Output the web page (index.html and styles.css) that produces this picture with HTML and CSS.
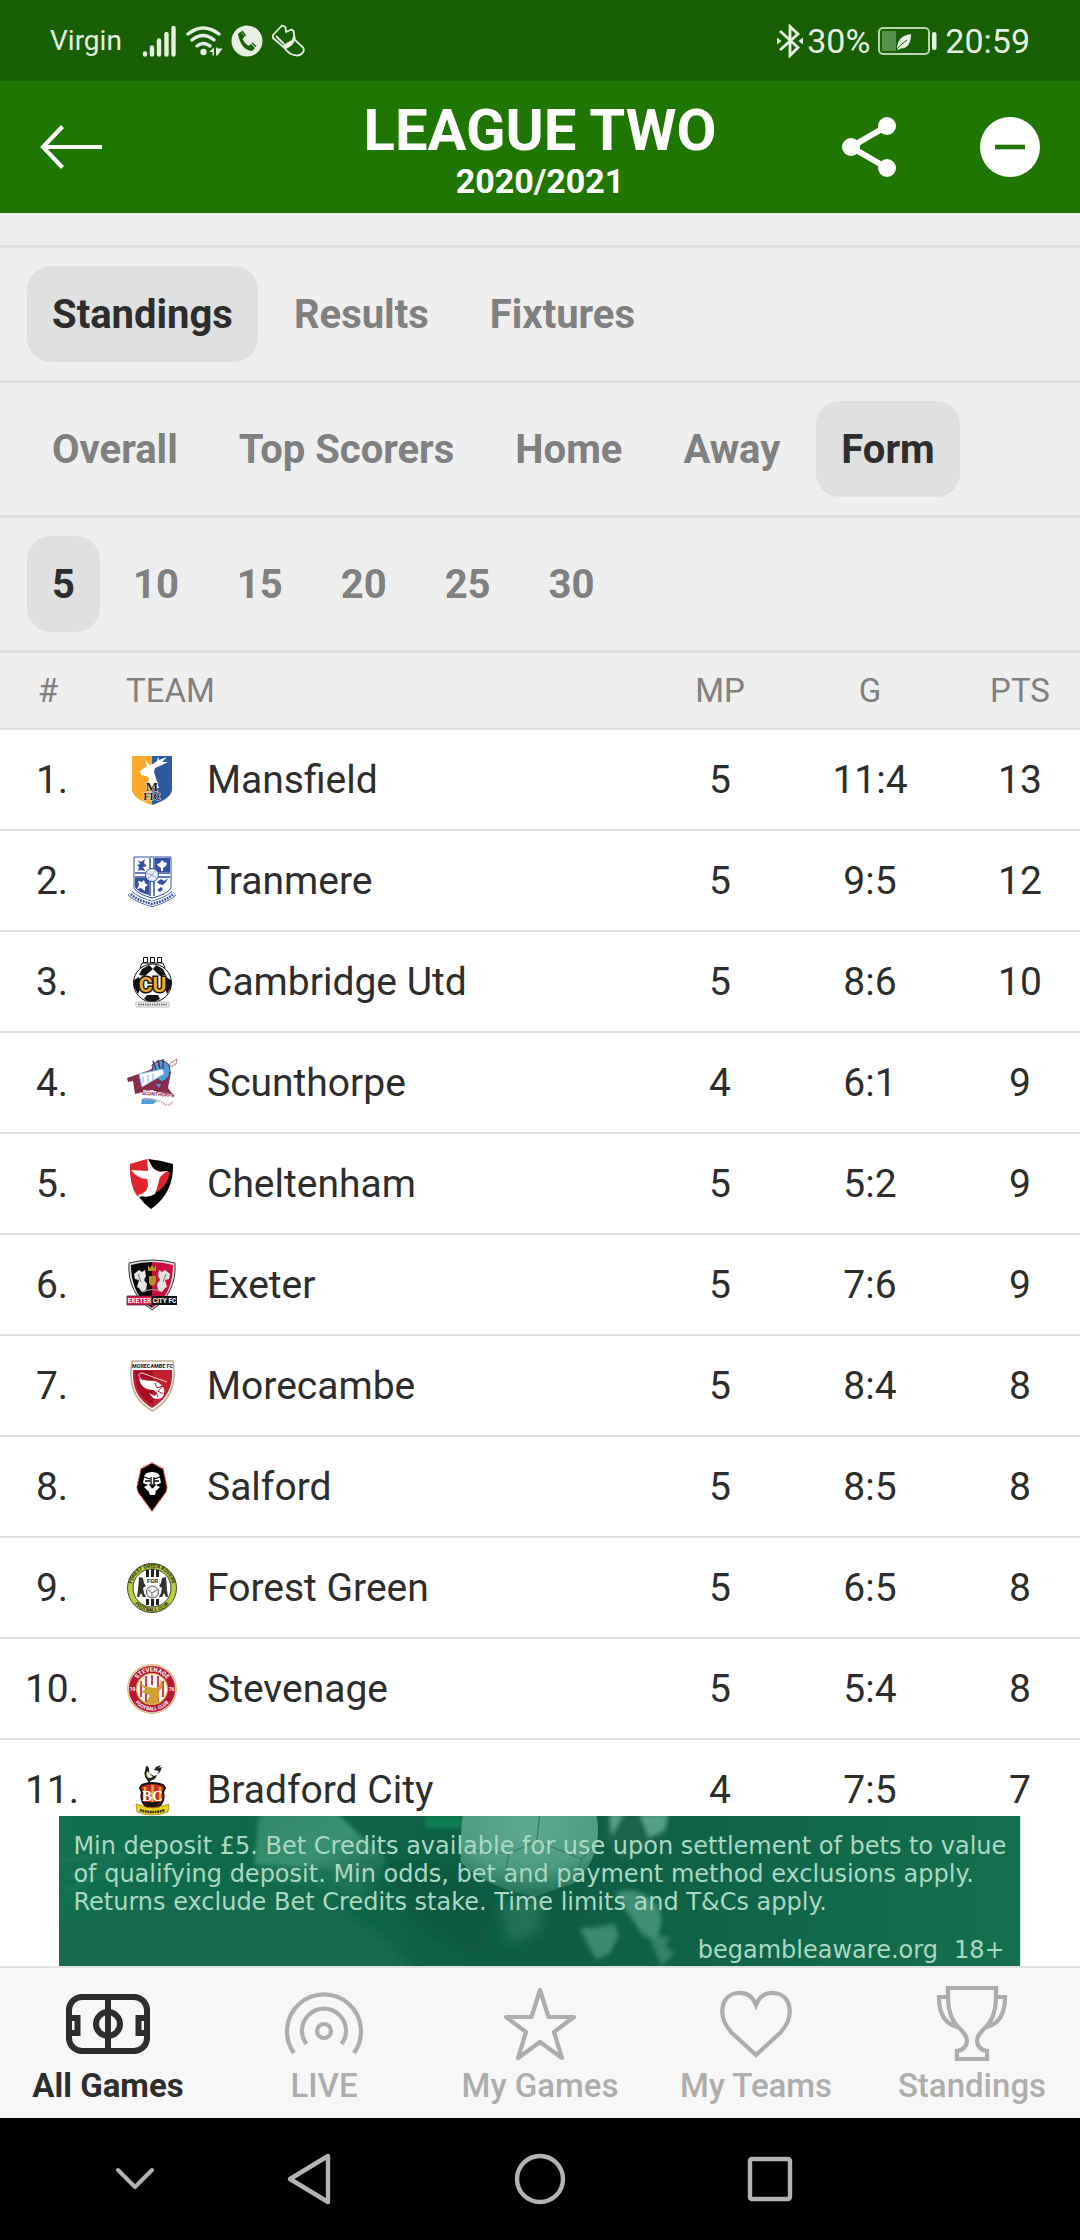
FILE: index.html
```html
<!DOCTYPE html>
<html lang="en">
<head>
  <meta charset="UTF-8">
  <meta name="viewport" content="width=device-width, initial-scale=1">
  <title>League Two 2020/2021</title>
  <link rel="stylesheet" href="styles.css">
</head>
<body>

  <div class="status-bar">
    <div class="status-left">
      <span class="carrier">Virgin</span>
      <svg width="35" height="32" viewBox="0 0 35 32" stroke="#e6efe2" stroke-width="4.4" stroke-linecap="round">
        <path d="M3 28.5v1M10 22.500v7M17 15.500v14M24.500 9v20.500M31.500 3v26.500"/>
      </svg>
      <svg width="38" height="32" viewBox="0 0 38 32" fill="none" stroke="#e6efe2" stroke-width="3.400" stroke-linecap="round">
        <path d="M3 9Q18 -3 34 9M7 15Q18 6 29 15M12 21Q18 16 25 21"/>
        <circle cx="18.500" cy="27" r="3.200" fill="#e6efe2" stroke="none"/>
        <path d="M24 27l5-4.500v8h-1.500v-3.500zM31 22.500h1.500v1h5l-5 7h-1.500z" fill="#e6efe2" stroke="none"/>
      </svg>
      <svg width="32" height="32" viewBox="0 0 32 32">
        <circle cx="16" cy="16" r="15.500" fill="#e6efe2"/>
        <path d="M7 9l3-2.500 3.500 5-2 2.500q2 4.500 6 7l2.500-2 4 4-3 3Q10 25 7 9z" fill="#175f00"/>
        <path d="M11 6l3.500 5M21 18l4 3.500" stroke="#175f00" stroke-width="1.500"/>
      </svg>
      <svg width="34" height="34" viewBox="0 0 34 34" fill="none" stroke="#e6efe2" stroke-width="1.800" stroke-linejoin="round">
        <path d="M2 11L11 1.500l3.500 1.500.5 5 5.500-2.500 2 1.500 1.500 9 8 7.500q2 3-1 6-4 4-12 0-4-3-6-6L2 14z"/>
        <path d="M24 16q-1 5-9 9l-3-4 9-5 1.500-6z" fill="#e6efe2" stroke="none"/>
        <path d="M5 12l8 8"/>
      </svg>
    </div>
    <div class="status-right">
      <svg width="26" height="34" viewBox="0 0 26 34" fill="none" stroke="#e6efe2" stroke-width="2.800">
        <path d="M3 7l18 16.500-8 8V2.500l8 7.500L3 26"/>
        <path d="M0 13.500l4.500 3.500L0 20.500zM26 13.500L21.500 17l4.500 3.500z" fill="#e6efe2" stroke="none"/>
      </svg>
      <span>30%</span>
      <svg class="battery" width="59" height="28" viewBox="0 0 59 28">
        <rect x="1" y="1" width="50" height="26" rx="4" fill="none" stroke="#b9d2b0" stroke-width="2"/>
        <rect x="4" y="4" width="14" height="20" rx="1" fill="#58904b"/>
        <path d="M19 22q0-13 14-15 0 14-10 14.500L20 23z" fill="#e6efe2"/>
        <path d="M19 22q5-6 10-9" fill="none" stroke="#175f00"/>
        <rect x="54" y="5" width="4.500" height="18" rx="2" fill="#e6efe2"/>
      </svg>
      <span>20:59</span>
    </div>
  </div>

  <header class="app-header">
    <button class="icon-button" type="button" aria-label="Back">
      <svg width="62" height="44" viewBox="0 0 62 44" fill="none" stroke="#fff" stroke-width="4.200">
        <path d="M62 22H4M22.500 1.500L3 22l19.500 20.500"/>
      </svg>
    </button>
    <div class="title">
      <h1>LEAGUE TWO</h1>
      <p>2020/2021</p>
    </div>
    <div class="header-actions">
      <button class="icon-button" type="button" aria-label="Share">
        <svg width="54" height="60" viewBox="0 0 54 60" fill="#fff">
          <path d="M45 9L9 30l36 21" fill="none" stroke="#fff" stroke-width="6"/>
          <circle cx="9" cy="30" r="9"/>
          <circle cx="45" cy="9" r="9"/>
          <circle cx="45" cy="51" r="9"/>
        </svg>
      </button>
      <button class="icon-button" type="button" aria-label="Remove league">
        <svg width="60" height="60" viewBox="0 0 60 60">
          <circle cx="30" cy="30" r="30" fill="#fff"/>
          <path d="M15 30h30" stroke="#1f7600" stroke-width="4.600"/>
        </svg>
      </button>
    </div>
  </header>

  <main class="content">
    <nav class="tabs" aria-label="Sections">
      <button class="tab active" type="button">Standings</button>
      <button class="tab" type="button">Results</button>
      <button class="tab" type="button">Fixtures</button>
    </nav>
    <nav class="tabs" aria-label="Tables">
      <button class="tab" type="button">Overall</button>
      <button class="tab" type="button">Top Scorers</button>
      <button class="tab" type="button">Home</button>
      <button class="tab" type="button">Away</button>
      <button class="tab active" type="button">Form</button>
    </nav>
    <nav class="tabs matches" aria-label="Number of matches">
      <button class="tab active" type="button">5</button>
      <button class="tab" type="button">10</button>
      <button class="tab" type="button">15</button>
      <button class="tab" type="button">20</button>
      <button class="tab" type="button">25</button>
      <button class="tab" type="button">30</button>
    </nav>

    <table class="standings">
      <colgroup>
        <col class="col-rank">
        <col class="col-logo">
        <col>
        <col class="col-mp">
        <col class="col-goals">
        <col class="col-pts">
      </colgroup>
      <thead>
        <tr>
          <th class="rank">#</th>
          <th class="team" colspan="2">TEAM</th>
          <th>MP</th>
          <th>G</th>
          <th>PTS</th>
        </tr>
      </thead>
      <tbody>
        <tr>
          <td>1.</td>
          <td class="logo">
            <svg viewBox="0 0 52 52">
              <path d="M6 2h20v49Q7 45 6 36z" fill="#faa928"/>
              <path d="M26 2h20v34q-1 9-20 15z" fill="#2c5a9e"/>
              <path d="M14 17l7-5-2-6 5 5 3-1 4-3 1-4 1 3 8-3-5 5h6l-8 4-5 2-1 4 5 16H22l1-10-3-2-5-1z" fill="#fff"/>
              <text x="26" y="37" font-size="13" class="crest-serif crest-outline" fill="#222">M</text>
              <text x="26" y="46" font-size="10" class="crest-serif crest-outline" fill="#222">FIC</text>
            </svg>
          </td>
          <td class="team">Mansfield</td>
          <td>5</td><td>11:4</td><td>13</td>
        </tr>
        <tr>
          <td>2.</td>
          <td class="logo">
            <svg viewBox="0 0 52 52">
              <path d="M8 2h37v31q-3 6-19 10Q11 39 8 33z" fill="#fff" stroke="#3350a4"/>
              <path d="M29 3h15v14H29zM9 23h14v17q-12-3-14-8z" fill="#3350a4"/>
              <path d="M24 3v38M28 3v38M9 18h35M9 22h35" stroke="#3350a4" stroke-width="1.500"/>
              <path d="M12 5l3 2 4-3-1 4 3 3-4 1 2 4-5-1-2 1 1-4-2-2 3-1zM31 27l4-3 3 2 4-3-2 4-3 3-4-1zM31 35l4-3 2 2-3 3z" fill="#3350a4"/>
              <path d="M36 5l2 2 3 1-1 3-3 2v3h-2v-3l-3-2-1-2 3-1zM12 26l4 1 2-2 1 3 3 2-3 2v4l-4-3-4 1 2-4z" fill="#fff"/>
              <circle cx="26" cy="20" r="6.500" fill="#edf1fa" stroke="#3350a4"/>
              <path d="M21 18l10 5M22 24l7-8" stroke="#8fa0d2"/>
              <path d="M4 38q5 6 22 11 17-5 22-11" fill="none" stroke="#3350a4" stroke-width="6"/>
              <path d="M4 38q5 6 22 11 17-5 22-11" fill="none" stroke="#fff" stroke-width="4.500"/>
              <path d="M5 39q5 6 21 10 16-4 21-10" fill="none" stroke="#3350a4" stroke-width="2.500" stroke-dasharray="1.800 1"/>
            </svg>
          </td>
          <td class="team">Tranmere</td>
          <td>5</td><td>9:5</td><td>12</td>
        </tr>
        <tr>
          <td>3.</td>
          <td class="logo">
            <svg viewBox="0 0 52 52">
              <path d="M17.500 1.500h4v5h-4zM24.500 1.500h4v5h-4zM31.500 1.500h4v5h-4zM16 7h21l2 5H14z" fill="#fff" stroke="#111"/>
              <circle cx="26.500" cy="27" r="19" fill="#fff" stroke="#111"/>
              <path d="M16 13l7-4 4 4-8 7-6-1zM37 13l-7-4-3 4 7 7 6-1zM8 24l5-3 3 8-4 9-4-7zM45 24l-5-3-2 8 3 9 4-7zM21 39h11l2 4-8 4-8-4z" fill="#111"/>
              <text x="26.500" y="36" font-size="21" class="crest-text crest-cu" fill="#f0a72f">CU</text>
              <rect x="10" y="46" width="33" height="5" rx="1" fill="#fff" stroke="#999" stroke-width=".7"/>
              <path d="M12 48.500h29" stroke="#666" stroke-width="1.800" stroke-dasharray="1.500 .8"/>
            </svg>
          </td>
          <td class="team">Cambridge Utd</td>
          <td>5</td><td>8:6</td><td>10</td>
        </tr>
        <tr>
          <td>4.</td>
          <td class="logo">
            <svg viewBox="0 0 52 52">
              <path d="M1 21l23-8 7-6 14 8-3 16 6 8-2 1-20-7-17 4-2-13-5 1z" fill="#8a2c4c"/>
              <path d="M26 8q10-9 17 0 4 12-7 17l-8-6z" fill="#4d9fd6" stroke="#533053"/>
              <path d="M27 4l3 9M32 3l2 9M37 2v11" stroke="#533053" stroke-width="1.500"/>
              <path d="M13 17l24-5 1 5-22 13z" fill="#fff" stroke="#7ec0e6"/>
              <path d="M17 20v6M22 18v7M27 17v6" stroke="#9dccec" stroke-width="1.500"/>
              <path d="M43 7l8-5-1 5-5 3z" fill="#fff" stroke="#b9798d"/>
              <path d="M30 27h5l-2 4zM16 42q9-2 15 2l-4 3H15z" fill="#4d9fd6"/>
              <path d="M17 33l30 4v8l-30-5z" fill="#fff"/>
              <text x="32" y="39" font-size="5" class="crest-text" fill="#8a2c4c" transform="rotate(4 32 38)">SCUNTHORPE</text>
              <path d="M18 42q14 0 19 4t10-1" fill="none" stroke="#c79aa9" stroke-width="2" stroke-dasharray="1.500 1"/>
            </svg>
          </td>
          <td class="team">Scunthorpe</td>
          <td>4</td><td>6:1</td><td>9</td>
        </tr>
        <tr>
          <td>5.</td>
          <td class="logo">
            <svg viewBox="0 0 52 52">
              <path d="M22 1q12 1 25 5 1 29-22 45-7-5-12-12 15-3 24-18l5-8-12 3z" fill="#050505"/>
              <path d="M4 6l17-5 5 11 18 2q-3 16-16 21l-17 3Q3 26 4 6z" fill="#e0242d"/>
              <path d="M5 12l17 1-1-12q5 11 13 13l7-1-7 6q-4 15-5 17-8 5-17 1 13-3 9-16Q12 21 5 12z" fill="#fff"/>
            </svg>
          </td>
          <td class="team">Cheltenham</td>
          <td>5</td><td>5:2</td><td>9</td>
        </tr>
        <tr>
          <td>6.</td>
          <td class="logo">
            <svg viewBox="0 0 52 52">
              <path d="M3 4q23-6 46 0 2 30-23 47Q1 34 3 4z" fill="#ddd" stroke="#333"/>
              <path d="M5 6q10-3 21-3v46Q5 36 5 6z" fill="#080808"/>
              <path d="M47 6q-10-3-21-3v46Q47 36 47 6z" fill="#c90f3e"/>
              <path d="M8 15l5-4 3 2 3-2 1 6-2 4 3 4-1 6-4 2-3-4-2-1 2-7-4-1zM44 15l-5-4-3 2-3-2-1 6 2 4-3 4 1 6 4 2 3-4 2-1-2-7 4-1z" fill="#e5e5e5"/>
              <path d="M12 15l3 8M40 15l-3 8" stroke="#777"/>
              <path d="M22 6l2 3 2-3 2 3 2-3v6h-8zM23 17h7v6q-1 3-3.500 4Q23 26 23 23z" fill="#b48f22"/>
              <path d="M17 33q9-5 19 0" stroke="#aaa" fill="none"/>
              <path d="M1 37h25v9H1z" fill="#e3174a" stroke="#333" stroke-width=".8"/>
              <path d="M26 37h25v9H26z" fill="#111"/>
              <text x="26" y="44" font-size="6.500" class="crest-text" fill="#fff">EXETER CITY FC</text>
            </svg>
          </td>
          <td class="team">Exeter</td>
          <td>5</td><td>7:6</td><td>9</td>
        </tr>
        <tr>
          <td>7.</td>
          <td class="logo">
            <svg viewBox="0 0 52 52">
              <path d="M6 1h41q0 5 1 7 2 29-21.500 43Q3 38 5 9q1-3 1-8z" fill="#fff" stroke="#bfae92" stroke-width="1.500"/>
              <path d="M7 10h39q2 25-20 38Q5 36 7 10z" fill="#c41f31"/>
              <path d="M9 11h18v34Q8 35 9 11z" fill="#a60d22"/>
              <path d="M13 19q7 2 16 2 11 4 9 13-2 7-11 4l-4-5 6 3q3-3-1-6-12 1-15-11z" fill="#fff"/>
              <path d="M15 19q-5-6 1-6l25 9" fill="none" stroke="#f5d7da"/>
              <path d="M29 23l2 5 6-2-5 5 5 3M32 37l-2-5" stroke="#c41f31" fill="none"/>
              <text x="26.500" y="8" font-size="5.400" class="crest-text" fill="#111">MORECAMBE FC</text>
            </svg>
          </td>
          <td class="team">Morecambe</td>
          <td>5</td><td>8:4</td><td>8</td>
        </tr>
        <tr>
          <td>8.</td>
          <td class="logo">
            <svg viewBox="0 0 52 52">
              <path d="M26 2l11 6 4 18-1 5-14 19-14-19-1-5 4-18z" fill="#000" stroke="#d83a32" stroke-width="1.200" stroke-dasharray="2 .8"/>
              <path d="M18 17q0-6 8-6t8 6l1 5-5 2 4 2-4 4-4-3-4 3-4-4 4-2-5-2z" fill="#fff"/>
              <path d="M18 16l6 2M34 16l-6 2M19 20h5M28 20h5M24 24h5l-2.500 3zM25 16v7M28 16v7" stroke="#000" stroke-width="1.300"/>
              <path d="M22 29l4-2 4 2-1 5h-5z" fill="#fff"/>
            </svg>
          </td>
          <td class="team">Salford</td>
          <td>5</td><td>8:5</td><td>8</td>
        </tr>
        <tr>
          <td>9.</td>
          <td class="logo">
            <svg viewBox="0 0 52 52">
              <circle cx="26" cy="26" r="24.500" fill="#b5cf35" stroke="#444"/>
              <circle cx="26" cy="26" r="19" fill="#fff" stroke="#444"/>
              <path d="M21.500 8v7M26.500 7v8M31.500 8v7M21.500 37v6M26.500 37v7M31.500 37v6" stroke="#222" stroke-width="3"/>
              <path d="M13 15l4 1 1 5 2 3-3 2 1 5 2 4h-3l-2-4-2 4h-2l1-7zM40 15l-4 1-1 5-2 3 3 2-1 5-2 4h3l2-4 2 4h2l-1-7z" fill="#333"/>
              <text x="26.500" y="21" font-size="6" class="crest-text" fill="#222">FGR</text>
              <circle cx="26.500" cy="30" r="6" fill="#eee" stroke="#555"/>
              <path d="M22 28l4 3 5-3M26 31v5" stroke="#777" fill="none"/>
              <path id="green-top" d="M5.500 26a20.500 20.500 0 0 1 41 0" fill="none"/>
              <path id="green-bottom" d="M2.500 26a23.500 23.500 0 0 0 47 0" fill="none"/>
              <text font-size="5" class="crest-text" fill="#222"><textPath href="#green-top" startOffset="50%">FOREST GREEN ROVERS</textPath></text>
              <text font-size="5" class="crest-text" fill="#222"><textPath href="#green-bottom" startOffset="50%">FOOTBALL CLUB</textPath></text>
            </svg>
          </td>
          <td class="team">Forest Green</td>
          <td>5</td><td>6:5</td><td>8</td>
        </tr>
        <tr>
          <td>10.</td>
          <td class="logo">
            <svg viewBox="0 0 52 52">
              <circle cx="26" cy="26" r="25" fill="#d9bd7c"/>
              <circle cx="26" cy="26" r="23.500" fill="#b81632" stroke="#fff" stroke-width=".6"/>
              <circle cx="26" cy="26" r="15.500" fill="#fff" stroke="#d9a93c" stroke-width="1.200"/>
              <path d="M15 18v16M20 13v26M32 13v26M37 18v16M26 12v10" stroke="#c74458" stroke-width="2.200"/>
              <path d="M14 17q2 7 9 7l6 1q7-1 5-9 6 7-1 12v5l-1 7q-6 2-12 0l4-8-9-3 5-3q-7-3-6-9z" fill="#cfa032"/>
              <text x="6.500" y="28" font-size="5" class="crest-text" fill="#fff">19</text>
              <text x="45.500" y="28" font-size="5" class="crest-text" fill="#fff">76</text>
              <path id="stevenage-top" d="M8.500 26a17.500 17.500 0 0 1 35 0" fill="none"/>
              <path id="stevenage-bottom" d="M4.500 26a21.500 21.500 0 0 0 43 0" fill="none"/>
              <text font-size="6" class="crest-text" fill="#fff"><textPath href="#stevenage-top" startOffset="50%">STEVENAGE</textPath></text>
              <text font-size="5" class="crest-text" fill="#fff"><textPath href="#stevenage-bottom" startOffset="50%">FOOTBALL CLUB</textPath></text>
            </svg>
          </td>
          <td class="team">Stevenage</td>
          <td>5</td><td>5:4</td><td>8</td>
        </tr>
        <tr>
          <td>11.</td>
          <td class="logo">
            <svg viewBox="0 0 52 52">
              <path d="M20 2q4 0 3 7l5 3q6-1 8-9l-3 1 2-3-5 2-2 3 5 1-4 8-5 2v3h-2v-3q-5-5-3-10z" fill="#222"/>
              <path d="M21 7q-2 7 3 7l3-1z" fill="#f5f0c8"/>
              <path d="M16 21q10-4 21 0l2 3-2 4q3 12-10.500 19Q13 40 16 28l-2-4z" fill="#c72c2c" stroke="#151515" stroke-width="2"/>
              <path d="M19 23v14M26.500 21v18M34 23v14" stroke="#efb21f" stroke-width="2.500"/>
              <text x="26.500" y="37" font-size="15" class="crest-serif" fill="#fff">BC</text>
              <path d="M18 38h17l-5 5h-8z" fill="#151515"/>
              <path d="M10 40l7 2q9 4 19 0l7-2-1 8q-16 6-31 0z" fill="#f3d21c" stroke="#8d7a14" stroke-width=".7"/>
              <path d="M14 46q12 4 25 0" fill="none" stroke="#222" stroke-width="2.500" stroke-dasharray="1.800 .7"/>
            </svg>
          </td>
          <td class="team">Bradford City</td>
          <td>4</td><td>7:5</td><td>7</td>
        </tr>
      </tbody>
    </table>
  </main>

  <aside class="ad">
    <svg class="ad-art" viewBox="0 0 960 150" preserveAspectRatio="none" aria-hidden="true">
      <defs>
        <linearGradient id="turf" x1="0" x2="1">
          <stop offset="0" stop-color="#11704f"/>
          <stop offset=".5" stop-color="#0d5c43"/>
          <stop offset="1" stop-color="#15704f"/>
        </linearGradient>
        <linearGradient id="leg" x1="0" x2="1" y2="1">
          <stop offset="0" stop-color="#2f8768"/>
          <stop offset=".5" stop-color="#3a9071"/>
          <stop offset="1" stop-color="#0e6248"/>
        </linearGradient>
        <radialGradient id="ball" cy=".1" r=".9">
          <stop offset="0" stop-color="#60ac92"/>
          <stop offset=".6" stop-color="#4d9b80"/>
          <stop offset="1" stop-color="#1e6f54"/>
        </radialGradient>
        <filter id="soft"><feGaussianBlur stdDeviation="2"/></filter>
        <filter id="softer"><feGaussianBlur stdDeviation="6"/></filter>
      </defs>
      <rect width="960" height="150" fill="url(#turf)"/>
      <g filter="url(#softer)">
        <path d="M-20 110Q120 70 260 80L330 125 370 170H-20z" fill="#146a4d"/>
        <path d="M200 45l120 5-15 35-50-15-55-5z" fill="#1d7457"/>
        <path d="M325 50h65l50 40-20 50-60-30z" fill="#0e583f"/>
        <path d="M440 85l45-4-5 35-30 12z" fill="#247257"/>
      </g>
      <g filter="url(#soft)">
        <path d="M0 45l70-8M5 62l60-20M5 75l50-20" stroke="#207859" stroke-width="3"/>
        <path d="M200-5h75l52 48-14 30-43-20-75-5z" fill="url(#leg)"/>
        <path d="M365 0h38v12h-36z" fill="#0b8052"/>
        <path d="M548 0l-5 20 20 25 40-20 8-25z" fill="#1b634a"/>
        <path d="M580-2h28l-3 16-16 8zM550-2h14l-12 22z" fill="#55a188"/>
        <path d="M556 78q12-8 28 0 16 8 18 26l-4 20-14-4-14-20z" fill="#3f8e73"/>
        <path d="M520 112q20 0 35-5l4 12-8 18-14 7-8-14z" fill="#3a896e"/>
        <path d="M590 122l20-2-4 10 8 8-12 12z" fill="#35846a"/>
      </g>
      <path d="M403 0h134q7 40-22 66l-40 15q-50-10-74-35 0-30 2-46z" fill="url(#ball)"/>
      <path d="M449 38l28-13 45 18-8 24-40 12-28-22zM477 25l3-25M522 43l14-14M449 38l-45-5" fill="none" stroke="#347c65" stroke-width="1.200"/>
    </svg>
    <p class="ad-terms">
      Min deposit £5. Bet Credits available for use upon settlement of bets to value<br>
      of qualifying deposit. Min odds, bet and payment method exclusions apply.<br>
      Returns exclude Bet Credits stake. Time limits and T&amp;Cs apply.
    </p>
    <p class="ad-footer"><span>begambleaware.org</span><span>18+</span></p>
  </aside>

  <nav class="bottom-nav" aria-label="Main">
    <a class="nav-item current" href="#">
      <svg width="84" height="76" viewBox="0 0 84 76" fill="none" stroke="#2d2d2d" stroke-width="6">
        <rect x="3" y="11" width="78" height="54" rx="13"/>
        <path d="M42 11v54M3 32h8.500v15H3M81 32h-8.500v15H81"/>
        <circle cx="42" cy="38" r="12"/>
      </svg>
      <span>All Games</span>
    </a>
    <a class="nav-item" href="#">
      <svg width="84" height="76" viewBox="0 0 84 76" fill="none" stroke="#adadad" stroke-width="4.200">
        <circle cx="42" cy="45" r="7"/>
        <path d="M24.500 58A22 22 0 1 1 59.500 58M12 67A37 37 0 1 1 72 67"/>
      </svg>
      <span>LIVE</span>
    </a>
    <a class="nav-item" href="#">
      <svg width="84" height="76" viewBox="0 0 84 76" fill="none" stroke="#adadad" stroke-width="4.200" stroke-linejoin="round">
        <path d="M42 4l8.500 27H76L56 46l8 26-22-16-22 16 8-26L8 31h25.500z"/>
      </svg>
      <span>My Games</span>
    </a>
    <a class="nav-item" href="#">
      <svg width="84" height="76" viewBox="0 0 84 76" fill="none" stroke="#adadad" stroke-width="4.200">
        <path d="M42 69L18 47C2 30 7 8 24 7q13-1 18 12Q47 6 60 7c17 1 22 23 6 40z"/>
      </svg>
      <span>My Teams</span>
    </a>
    <a class="nav-item" href="#">
      <svg width="84" height="76" viewBox="0 0 84 76" fill="none" stroke="#adadad" stroke-width="4.200">
        <path d="M18 2h48v8c0 34-19 32-19 45q1 9 10 10v8H27v-8q9-1 10-10c0-13-19-11-19-45z"/>
        <path d="M18 11H9q0 26 19 30M66 11h9q0 26-19 30"/>
      </svg>
      <span>Standings</span>
    </a>
  </nav>

  <div class="system-nav">
    <button class="icon-button hide-key" type="button" aria-label="Hide navigation bar">
      <svg width="40" height="24" viewBox="0 0 40 24" fill="none" stroke="#b3b3b3" stroke-width="4" stroke-linecap="round" stroke-linejoin="round"><path d="M3 3l17 17L37 3"/></svg>
    </button>
    <button class="icon-button" type="button" aria-label="Back">
      <svg width="46" height="52" viewBox="0 0 46 52" fill="none" stroke="#b3b3b3" stroke-width="4.400" stroke-linejoin="round"><path d="M41 3v46L3 26z"/></svg>
    </button>
    <button class="icon-button" type="button" aria-label="Home">
      <svg width="52" height="52" viewBox="0 0 52 52" fill="none" stroke="#b3b3b3" stroke-width="4.400"><circle cx="26" cy="26" r="23"/></svg>
    </button>
    <button class="icon-button" type="button" aria-label="Recent apps">
      <svg width="46" height="46" viewBox="0 0 46 46" fill="none" stroke="#b3b3b3" stroke-width="4.400"><rect x="3" y="3" width="40" height="40" rx="2"/></svg>
    </button>
  </div>

</body>
</html>
```
FILE: styles.css
```css
* {
  box-sizing: border-box;
}

body {
  margin: 0;
  height: 100vh;
  display: flex;
  flex-direction: column;
  background-color: #fff;
  color: #2d2d2d;
  font-family: Roboto, "Liberation Sans", sans-serif;
}

h1, p {
  margin: 0;
}

svg {
  display: block;
  flex-shrink: 0;
}

button {
  margin: 0;
  border: none;
  background: none;
  color: inherit;
  font-family: inherit;
  cursor: pointer;
}

.icon-button {
  padding: 0;
}

/* status bar */
.status-bar {
  display: flex;
  justify-content: space-between;
  align-items: center;
  height: 81px;
  padding: 0 50px;
  background-color: #175f00;
  color: #e6efe2;
  font-size: 34px;
}

.status-left, .status-right {
  display: flex;
  align-items: center;
  gap: 8px;
}

.carrier {
  margin-right: 12px;
  font-size: 28px;
}

.status-right {
  gap: 4px;
}

.battery {
  margin: 0 4px;
}

/* league header */
.app-header {
  display: grid;
  grid-template-columns: 1fr auto 1fr;
  align-items: center;
  height: 132px;
  padding: 0 40px;
  background-color: #1f7600;
  color: #fff;
}

.title {
  padding-top: 8px;
  text-align: center;
}

.title h1 {
  font-size: 58px;
  line-height: 60px;
  font-weight: bold;
}

.title p {
  font-size: 34px;
  line-height: 42px;
  font-weight: bold;
}

.header-actions {
  display: flex;
  justify-content: flex-end;
  gap: 84px;
}

/* content */
.content {
  flex: 1;
  min-height: 0;
  overflow: hidden;
  padding-top: 32px;
  background-color: #efefef;
}

.tabs {
  display: flex;
  align-items: center;
  gap: 11px;
  height: 135px;
  padding: 0 27px;
  border-top: 3px solid #e0e0e0;
}

.matches {
  gap: 8px;
}

.tab {
  height: 96px;
  padding: 0 25px;
  border-radius: 24px;
  color: #808080;
  font-size: 40px;
  font-weight: bold;
}

.tab.active {
  background-color: #e0e0e0;
  color: #2d2d2d;
}

.standings {
  width: 100%;
  table-layout: fixed;
  border-collapse: separate;
  border-spacing: 0;
  border-top: 3px solid #e0e0e0;
}

.col-rank {
  width: 104px;
}

.col-logo {
  width: 103px;
}

.col-mp,
.col-pts {
  width: 120px;
}

.col-goals {
  width: 180px;
}

.standings th {
  height: 77px;
  padding: 0;
  border-bottom: 2px solid #e0e0e0;
  color: #808080;
  font-size: 33px;
  font-weight: normal;
}

.standings td {
  height: 101px;
  padding: 0;
  border-bottom: 2px solid #e0e0e0;
  background-color: #fff;
  text-align: center;
  font-size: 39px;
}

.standings th.rank {
  padding-right: 8px;
}

.standings .team {
  text-align: left;
}

.standings th.team,
.standings td.logo {
  padding-left: 22px;
}

.logo svg {
  width: 52px;
  height: 52px;
}

.crest-text,
.crest-serif {
  font-family: Roboto, sans-serif;
  font-weight: bold;
  text-anchor: middle;
}

.crest-serif {
  font-family: "Liberation Serif", serif;
}

.crest-outline {
  stroke: #ddd;
  stroke-width: 1;
  paint-order: stroke;
}

.crest-cu {
  stroke: #111;
  stroke-width: 3;
  paint-order: stroke;
}

/* advert */
.ad {
  position: relative;
  display: flex;
  flex-direction: column;
  justify-content: space-between;
  width: 89%;
  height: 150px;
  margin: 0 auto;
  padding: 16px 16px 2px 14px;
  overflow: hidden;
  color: #abd8c4;
  font-family: "DejaVu Sans", sans-serif;
  font-size: 24px;
  line-height: 28px;
}

.ad-art {
  position: absolute;
  inset: 0;
  width: 100%;
  height: 100%;
}

.ad p {
  position: relative;
}

.ad-terms {
  white-space: nowrap;
}

.ad-footer {
  display: flex;
  justify-content: flex-end;
  gap: 16px;
}

/* bottom navigation */
.bottom-nav {
  display: grid;
  grid-template-columns: repeat(5, 1fr);
  height: 152px;
  border-top: 2px solid #e0e0e0;
  background-color: #f7f7f7;
}

.nav-item {
  display: flex;
  flex-direction: column;
  align-items: center;
  gap: 3px;
  padding-top: 18px;
  color: #adadad;
  font-size: 33px;
  line-height: 42px;
  font-weight: 500;
  text-decoration: none;
}

.nav-item.current {
  color: #2d2d2d;
  font-weight: bold;
}

.system-nav {
  display: grid;
  grid-template-columns: 195fr 230fr 230fr 230fr 195fr;
  align-items: center;
  justify-items: center;
  height: 122px;
  background-color: #000;
}

.hide-key {
  justify-self: end;
  padding-right: 40px;
}
```
